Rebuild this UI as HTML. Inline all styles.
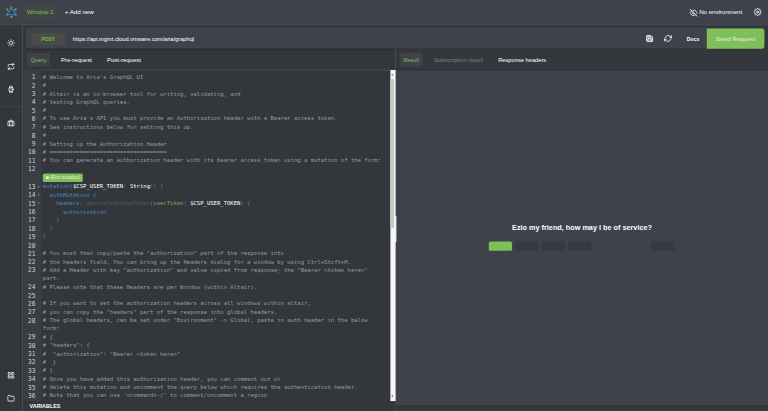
<!DOCTYPE html>
<html lang="en">
<head>
<meta charset="utf-8">
<title>Altair GraphQL Client</title>
<style>
*{box-sizing:border-box;margin:0;padding:0}
html,body{width:768px;height:411px;overflow:hidden;background:#33363b}
body{font-family:"Liberation Sans",sans-serif;color:#fff}
#app{position:absolute;left:0;top:0;width:1920px;height:1028px;transform:scale(.4);transform-origin:0 0;background:#33363b;overflow:hidden}
.abs{position:absolute}
/* header */
#header{position:absolute;left:0;top:0;width:1920px;height:62.5px;background:#3f424a;border-bottom:2.5px solid #484b52}
#logo{position:absolute;left:12.6px;top:12.6px;width:32px;height:32px}
.wtab{position:absolute;left:57px;top:11px;width:86px;height:39px;border-radius:5px;background:#434647;color:#7ec04f;font-size:15.6px;letter-spacing:-.2px;line-height:39.5px;text-align:center}
.addnew{position:absolute;left:162px;top:11px;height:39px;line-height:39.5px;font-size:15.6px;letter-spacing:-.1px;color:#fff}
.noenv{position:absolute;left:1748px;top:11px;height:39px;line-height:40px;font-size:15.4px;letter-spacing:-.1px;color:#fff}
.hico{position:absolute;width:20px;height:20px;fill:none;stroke:#ededed;stroke-width:2.8;stroke-linecap:round;stroke-linejoin:round}
/* sidebar */
#sidebar{position:absolute;left:0;top:62.5px;width:57.5px;height:966px;background:#33363b;border-right:3px solid #484b52}
.sico{position:absolute;left:17.7px;width:19px;height:19px;fill:none;stroke:#e8e8e8;stroke-width:2.9;stroke-linecap:round;stroke-linejoin:round}
.sdiv{position:absolute;left:0;top:202.5px;width:55px;height:2.5px;background:#3e4148}
/* url bar */
#urlbox{position:absolute;left:65px;top:69.5px;width:1846px;height:51.5px;background:#3f424a;border:2.5px solid #484b52;border-radius:6px;box-shadow:0 2px 3px rgba(0,0,0,.18)}
.post{position:absolute;left:78px;top:82px;width:85px;height:31px;border-radius:5px;background:#494d46;color:#6fbf3f;font-size:12.2px;font-weight:bold;line-height:33px;text-align:center}
.url{position:absolute;left:182px;top:82px;height:31px;line-height:33px;font-size:14.25px;color:#fff}
.docs{position:absolute;left:1717px;top:82px;height:31px;line-height:31px;font-size:12.9px;font-weight:bold;color:#fff}
.send{position:absolute;left:1767px;top:70.5px;width:144px;height:51px;background:#7fbf5a;border-radius:0 6px 6px 0;color:#e4efdb;font-size:15.6px;line-height:51px;text-align:center}
/* tabs */
.tab{position:absolute;top:132px;height:34px;line-height:35.5px;font-size:14.5px;color:#fff;white-space:nowrap}
.tab.on{background:#3f424a;border-radius:5px;color:#7ec04f;text-align:center}
.tab.dim{color:#7d8087}
#ltabline{position:absolute;left:58px;top:174px;width:930px;height:2.5px;background:#42454c}
/* right pane */
#rpane{position:absolute;left:988px;top:124px;width:932px;height:904px;background:#3f424a;border-left:2px solid #4a4d55}
#rtabs{position:absolute;left:0;top:0;width:931px;height:52px;background:#34373c;border-bottom:2px solid #2f3237}
#rstatus{position:absolute;left:0;top:890px;width:931px;height:14px;background:#34373c;border-top:2px solid #303338}
.msg{position:absolute;left:1200px;top:558px;width:510px;text-align:center;font-size:18.2px;font-weight:bold;color:#fff;white-space:nowrap}
.kb{position:absolute;top:604px;width:58px;height:23px;border-radius:4px;background:#373a40}
.kb.g{background:#7fbf5a}
/* editor */
#gutter{position:absolute;left:58px;top:176.5px;width:45.5px;height:827px;background:#3a3d44}
#code{position:absolute;left:58px;top:181.8px;width:918px;height:822px;overflow:hidden;font-family:"DejaVu Sans Mono","Liberation Mono",monospace;font-size:13.92px;line-height:20.9px;color:#9a9ca0}
.ln{position:relative;height:20.9px}
.ln .n{position:absolute;left:0;top:1.3px;width:30.5px;text-align:right;color:#d4d5d7;font-size:15.3px}
.ln .f{position:absolute;left:35.5px;top:0;color:#cfd0d2;font-size:9px}
.ln .t{position:absolute;left:49px;top:0;white-space:pre}
.ln.w2{height:41.8px}
.k{color:#4888c0}.p{color:#4888c0}.v{color:#fff}.d{color:#575a61}.a{color:#8fa070}.q{color:#74808c}
.run{position:relative;height:23.5px}
.run span{position:absolute;left:49px;top:1.5px;width:100px;height:21px;border-radius:4px;background:#7fbf5a;color:#e4efdb;font-family:"Liberation Sans",sans-serif;font-size:11.3px;line-height:21px;padding-left:8px;white-space:nowrap}
#vars{position:absolute;left:58px;top:1004px;width:930px;height:24px;background:#33363b;font-size:13.5px;font-weight:bold;line-height:22px;padding-left:16px;color:#fff}
/* scrollbar */
#sb{position:absolute;left:976px;top:175px;width:12.5px;height:828px;background:#f6f6f6}
#rsz{position:absolute;left:987px;top:540px;width:4px;height:66px;background:#ececec;border-radius:0 2px 2px 0}
#sb .au{position:absolute;left:1.5px;top:9.5px;border:3px solid transparent;border-top:0;border-bottom:4.5px solid #5a5d63}
#sb .ad{position:absolute;left:1.5px;top:814px;border:3px solid transparent;border-bottom:0;border-top:4.5px solid #5a5d63}
#sb .th{position:absolute;left:0;top:23px;width:9px;height:372px;background:#c6cac5}
</style>
</head>
<body>
<div id="app">
  <div id="header">
    <svg id="logo" viewBox="0 0 34 34"><path d="M16.5 6 L4.5 25.5 L28.5 25.5 Z" fill="none" stroke="#3f83b8" stroke-width="3"/><g fill="#3f83b8"><circle cx="16.5" cy="5.5" r="3"/><circle cx="4.5" cy="25.5" r="3"/><circle cx="28.5" cy="25.5" r="3"/></g><g fill="#7cc84a"><circle cx="5.5" cy="11.5" r="2.6"/><circle cx="27.5" cy="11.5" r="2.6"/><circle cx="16.5" cy="31" r="2.6"/></g></svg>
    <div class="wtab">Window 1</div>
    <div class="addnew">+ Add new</div>
    <svg class="hico" style="left:1724px;top:22px" viewBox="0 0 24 24"><path d="M17.94 17.94A10.07 10.07 0 0 1 12 20c-7 0-11-8-11-8a18.45 18.45 0 0 1 5.06-5.94M9.9 4.24A9.12 9.12 0 0 1 12 4c7 0 11 8 11 8a18.5 18.5 0 0 1-2.16 3.19m-6.72-1.07a3 3 0 1 1-4.24-4.24"/><line x1="1" y1="1" x2="23" y2="23"/></svg>
    <div class="noenv">No environment</div>
    <svg class="hico" style="left:1883.5px;top:20.1px" viewBox="0 0 24 24"><circle cx="12" cy="12" r="3"/><path d="M19.4 15a1.65 1.65 0 0 0 .33 1.82l.06.06a2 2 0 0 1 0 2.83 2 2 0 0 1-2.83 0l-.06-.06a1.65 1.65 0 0 0-1.82-.33 1.65 1.65 0 0 0-1 1.51V21a2 2 0 0 1-2 2 2 2 0 0 1-2-2v-.09A1.65 1.65 0 0 0 9 19.4a1.65 1.65 0 0 0-1.82.33l-.06.06a2 2 0 0 1-2.83 0 2 2 0 0 1 0-2.83l.06-.06a1.65 1.65 0 0 0 .33-1.82 1.65 1.65 0 0 0-1.51-1H3a2 2 0 0 1-2-2 2 2 0 0 1 2-2h.09A1.65 1.65 0 0 0 4.6 9a1.65 1.65 0 0 0-.33-1.82l-.06-.06a2 2 0 0 1 0-2.83 2 2 0 0 1 2.83 0l.06.06a1.65 1.65 0 0 0 1.82.33H9a1.65 1.65 0 0 0 1-1.51V3a2 2 0 0 1 2-2 2 2 0 0 1 2 2v.09a1.65 1.65 0 0 0 1 1.51 1.65 1.65 0 0 0 1.82-.33l.06-.06a2 2 0 0 1 2.83 0 2 2 0 0 1 0 2.83l-.06.06a1.65 1.65 0 0 0-.33 1.82V9a1.65 1.65 0 0 0 1.51 1H21a2 2 0 0 1 2 2 2 2 0 0 1-2 2h-.09a1.65 1.65 0 0 0-1.51 1z"/></svg>
  </div>
  <div id="sidebar">
    <svg class="sico" style="top:35.8px" viewBox="0 0 24 24"><circle cx="12" cy="12" r="5.2" stroke-width="2.3"/><path d="M12 1v2.2M12 20.8v2.2M4.22 4.22l1.5 1.5M18.28 18.28l1.5 1.5M1 12h2.2M20.8 12h2.2M4.22 19.78l1.5-1.5M18.28 5.72l1.5-1.5" stroke-width="2.7"/></svg>
    <svg class="sico" style="top:94.0px" viewBox="0 0 24 24"><polyline points="17 1 21 5 17 9"/><path d="M3 11V9a4 4 0 0 1 4-4h14"/><polyline points="7 23 3 19 7 15"/><path d="M21 13v2a4 4 0 0 1-4 4H3"/></svg>
    <svg class="sico" style="top:151.5px" viewBox="0 0 24 24"><circle cx="12" cy="12" r="7"/><polyline points="12 9 12 12 13.5 13.5"/><path d="M16.51 17.35l-.35 3.83a2 2 0 0 1-2 1.82H9.83a2 2 0 0 1-2-1.82l-.35-3.83m.01-10.7l.35-3.83A2 2 0 0 1 9.83 1h4.35a2 2 0 0 1 2 1.82l.35 3.83"/></svg>
    <div class="sdiv"></div>
    <svg class="sico" style="top:235.5px" viewBox="0 0 24 24"><rect x="2" y="7" width="20" height="14" rx="2" ry="2"/><path d="M16 21V5a2 2 0 0 0-2-2h-4a2 2 0 0 0-2 2v16"/></svg>
    <svg class="sico" style="top:866.5px" viewBox="0 0 24 24"><rect x="3" y="3" width="7" height="7" rx="1.5"/><rect x="14" y="3" width="7" height="7" rx="1.5"/><rect x="14" y="14" width="7" height="7" rx="1.5"/><rect x="3" y="14" width="7" height="7" rx="1.5"/></svg>
    <svg class="sico" style="top:923.5px" viewBox="0 0 24 24"><path d="M22 19a2 2 0 0 1-2 2H4a2 2 0 0 1-2-2V5a2 2 0 0 1 2-2h5l2 3h9a2 2 0 0 1 2 2z"/></svg>
  </div>
  <div id="urlbox"></div>
  <div class="post">POST</div>
  <div class="url">https://api.mgmt.cloud.vmware.com/aria/graphql</div>
  <svg class="hico" style="left:1613.5px;top:85.5px" viewBox="0 0 24 24"><path d="M19 21H5a2 2 0 0 1-2-2V5a2 2 0 0 1 2-2h11l5 5v11a2 2 0 0 1-2 2z" fill="rgba(255,255,255,.35)"/><polyline points="17 21 17 13 7 13 7 21"/><polyline points="7 3 7 8 15 8"/></svg>
  <svg class="hico" style="left:1660px;top:86.2px" viewBox="0 0 24 24"><polyline points="23 4 23 10 17 10"/><polyline points="1 20 1 14 7 14"/><path d="M3.51 9a9 9 0 0 1 14.85-3.36L23 10M1 14l4.64 4.36A9 9 0 0 0 20.49 15"/></svg>
  <div class="docs">Docs</div>
  <div class="send">Send Request</div>

  <div class="tab on" style="left:67px;width:58px">Query</div>
  <div class="tab" style="left:152.5px;font-size:14.85px">Pre-request</div>
  <div class="tab" style="left:267.5px;font-size:14.95px">Post-request</div>
  <div id="ltabline"></div>

  <div id="rpane">
    <div id="rtabs"></div>
    <div id="rstatus"></div>
  </div>
  <div class="tab on" style="left:999px;width:58px;font-size:13.8px">Result</div>
  <div class="tab dim" style="left:1085px;font-size:14.95px">Subscription result</div>
  <div class="tab" style="left:1245.5px;font-size:14.3px">Response headers</div>
  <div class="msg">Ezio my friend, how may I be of service?</div>
  <div class="kb g" style="left:1222px"></div>
  <div class="kb" style="left:1288px"></div>
  <div class="kb" style="left:1354px"></div>
  <div class="kb" style="left:1420px"></div>
  <div class="kb" style="left:1628px"></div>

  <div id="gutter"></div>
  <div id="code">
<div class="ln"><span class="n">1</span><span class="t"># Welcome to Aria's GraphQL UI</span></div>
<div class="ln"><span class="n">2</span><span class="t">#</span></div>
<div class="ln"><span class="n">3</span><span class="t"># Altair is an in-browser tool for writing, validating, and</span></div>
<div class="ln"><span class="n">4</span><span class="t"># testing GraphQL queries.</span></div>
<div class="ln"><span class="n">5</span><span class="t">#</span></div>
<div class="ln"><span class="n">6</span><span class="t"># To use Aria's API you must provide an Authorization header with a Bearer access token.</span></div>
<div class="ln"><span class="n">7</span><span class="t"># See instructions below for setting this up.</span></div>
<div class="ln"><span class="n">8</span><span class="t">#</span></div>
<div class="ln"><span class="n">9</span><span class="t"># Setting up the Authorization Header</span></div>
<div class="ln"><span class="n">10</span><span class="t"># ===================================</span></div>
<div class="ln"><span class="n">11</span><span class="t"># You can generate an authorization header with its bearer access token using a mutation of the form:</span></div>
<div class="ln"><span class="n">12</span><span class="t"></span></div>
<div class="run"><span>&#9654; (Run mutation)</span></div>
<div class="ln"><span class="n">13</span><span class="f">&#9662;</span><span class="t"><span class="k">mutation</span><span class="p">(</span><span class="v">$CSP_USER_TOKEN</span><span class="q">:</span> <span class="v">String</span><span class="q">!</span><span class="p">) {</span></span></div>
<div class="ln"><span class="n">14</span><span class="f">&#9662;</span><span class="t"><span class="k">  authMutation {</span></span></div>
<div class="ln"><span class="n">15</span><span class="f">&#9662;</span><span class="t"><span class="k">    headers:</span> <span class="d">generateAccessToken</span><span class="p">(</span><span class="a">userToken</span><span class="q">:</span> <span class="v">$CSP_USER_TOKEN</span><span class="p">) {</span></span></div>
<div class="ln"><span class="n">16</span><span class="t"><span class="k">      authorization</span></span></div>
<div class="ln"><span class="n">17</span><span class="t"><span class="k">    }</span></span></div>
<div class="ln"><span class="n">18</span><span class="t"><span class="k">  }</span></span></div>
<div class="ln"><span class="n">19</span><span class="t"><span class="k">}</span></span></div>
<div class="ln"><span class="n">20</span><span class="t"></span></div>
<div class="ln"><span class="n">21</span><span class="t"># You must then copy/paste the "authorization" part of the response into</span></div>
<div class="ln"><span class="n">22</span><span class="t"># the headers field. You can bring up the Headers dialog for a window by using Ctrl+Shift+H.</span></div>
<div class="ln w2"><span class="n">23</span><span class="t"># Add a Header with key "authorization" and value copied from response; the "Bearer &lt;token here&gt;"
part.</span></div>
<div class="ln"><span class="n">24</span><span class="t"># Please note that these Headers are per Window (within Altair).</span></div>
<div class="ln"><span class="n">25</span><span class="t"></span></div>
<div class="ln"><span class="n">26</span><span class="t"># If you want to set the authorization headers across all windows within altair,</span></div>
<div class="ln"><span class="n">27</span><span class="t"># you can copy the "headers" part of the response into global headers.</span></div>
<div class="ln w2"><span class="n">28</span><span class="t"># The global headers, can be set under "Environment" -&gt; Global, paste in auth header in the below
form:</span></div>
<div class="ln"><span class="n">29</span><span class="t"># {</span></div>
<div class="ln"><span class="n">30</span><span class="t"># "headers": {</span></div>
<div class="ln"><span class="n">31</span><span class="t">#  "authorization": "Bearer &lt;token here&gt;"</span></div>
<div class="ln"><span class="n">32</span><span class="t">#  }</span></div>
<div class="ln"><span class="n">33</span><span class="t"># }</span></div>
<div class="ln"><span class="n">34</span><span class="t"># Once you have added this authorization header, you can comment out or</span></div>
<div class="ln"><span class="n">35</span><span class="t"># delete this mutation and uncomment the query below which requires the authentication header.</span></div>
<div class="ln"><span class="n">36</span><span class="t"># Note that you can use '&lt;command&gt;-/' to comment/uncomment a region</span></div>
</div>
  <div id="rsz"></div>
  <div id="sb"><div class="th"></div><i class="au"></i><i class="ad"></i></div>
  <div id="vars">VARIABLES</div>
</div>
</body>
</html>
